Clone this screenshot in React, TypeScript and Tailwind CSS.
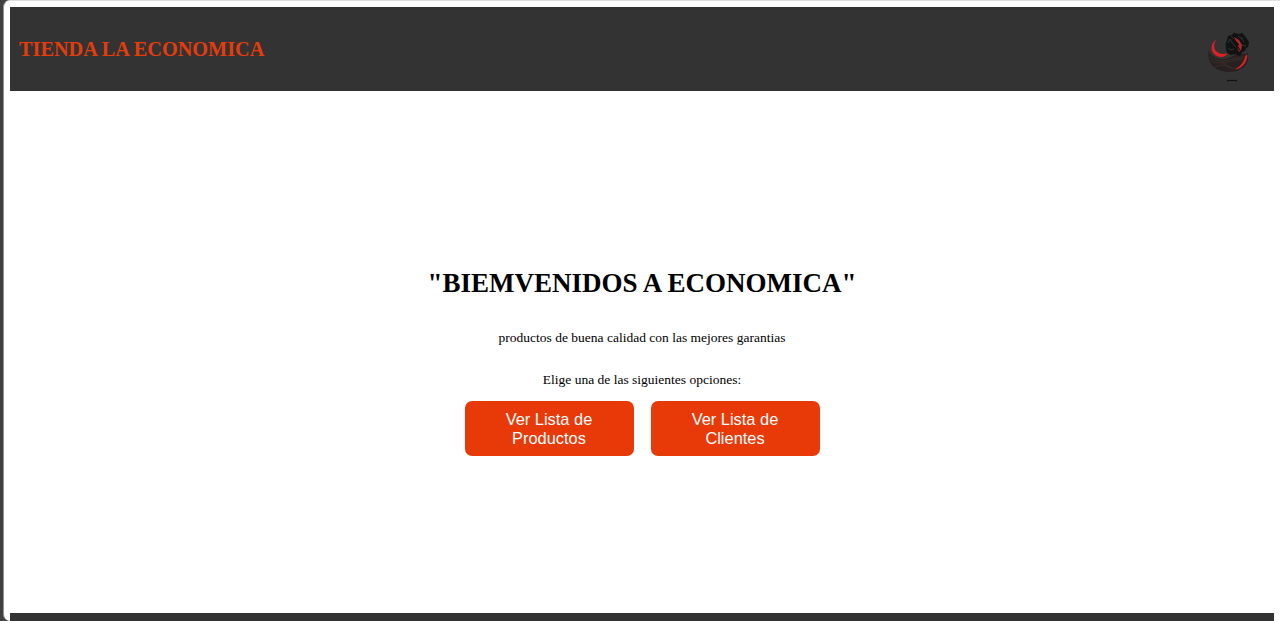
function LionLogo() {
  return (
    <svg viewBox="0 0 60 64" className="h-16 w-[60px]" role="img" aria-label="Logo">
      <path d="M9 26C10 31 14 34 20 35C27 36 32 32 38 30C42 29 46 31 48 29C49 36 47 42 41 45C35 49 22 49 15 44C10 40 7 34 9 26Z" fill="#292020" />
      <path d="M10 32C17 41 28 35 44 33M11 36C19 43 30 36 43 35M15 43C24 38 30 44 36 45M21 37L31 45" fill="none" stroke="#3d3331" strokeWidth=".7" />
      <path d="M17 15.5C11 18 10 26 14 30C18 34 25 34 28 29C23 31 18 30 15 26C13.500 22 14 18 17 15.500Z" fill="#df2024" />
      <path d="M45.500 32C45 37 41 42 36 45C42 44 47 38 47 31Z" fill="#e42328" stroke="#e42328" strokeWidth=".5" />
      <path d="M25.500 20L27 16L28 12L32 11L34 8.500L38 10L42 9L45 12L47 15L49 18L48 23L46 24L45 27L42 28L40 32L35 30L31 31L27 29L26 25Z" fill="#111212" />
      <path d="M28 19L30 15L33 20L36 23M31 12L34 15M41 13L44 18M38 12L42 15M42 21L46 22M28 24L31 26L34 25" fill="none" stroke="#353939" strokeWidth=".9" />
      <path d="M34 13L39 16L42 21L41 27L38 22L39 20L36 17Z M37 23L40 27L39 28Z" fill="#b52428" />
      <path d="M27 56.500H37" stroke="#111" strokeWidth="1.2" />
    </svg>
  );
}

const options = ["Ver Lista de Productos", "Ver Lista de Clientes"];

export default function App() {
  return (
    <div className="h-[621px] overflow-hidden bg-[#404040] pl-[3px]">
      <div className="flex h-full flex-col rounded-l-[7px] border-l border-t border-l-[#929292] border-t-[#e0dfe0] bg-white pl-1.5 pr-1.5 pt-1.5 font-['Liberation_Serif',serif]">
        <header className="flex h-[84px] shrink-0 items-center justify-between bg-[#333333] pl-[9px] pr-[14px]">
          <h2 className="text-[20.25px] leading-6 font-bold text-[#e53c0c]">TIENDA LA ECONOMICA</h2>
          <div className="mt-[14px] h-16 w-[60px]"><LionLogo /></div>
        </header>
        <main className="flex h-[522px] shrink-0 flex-col items-center pt-[176px] text-black">
          <h1 className="text-[27px] leading-8 font-bold">"BIEMVENIDOS A ECONOMICA"</h1>
          <p className="mt-[31px] text-[13.5px] leading-4">productos de buena calidad con las mejores garantias</p>
          <p className="mt-[26px] text-[13.5px] leading-4">Elige una de las siguientes opciones:</p>
          <nav className="mt-[13px] flex gap-[17px]">
            {options.map((label) => (
              <button key={label} className="h-[55px] w-[169px] rounded-[7px] bg-[#e83a09] px-9 font-['Liberation_Sans',sans-serif] text-[16.4px] leading-[19px] text-white">
                {label}
              </button>
            ))}
          </nav>
        </main>
        <footer className="h-2 shrink-0 bg-[#333333]" />
      </div>
    </div>
  );
}
